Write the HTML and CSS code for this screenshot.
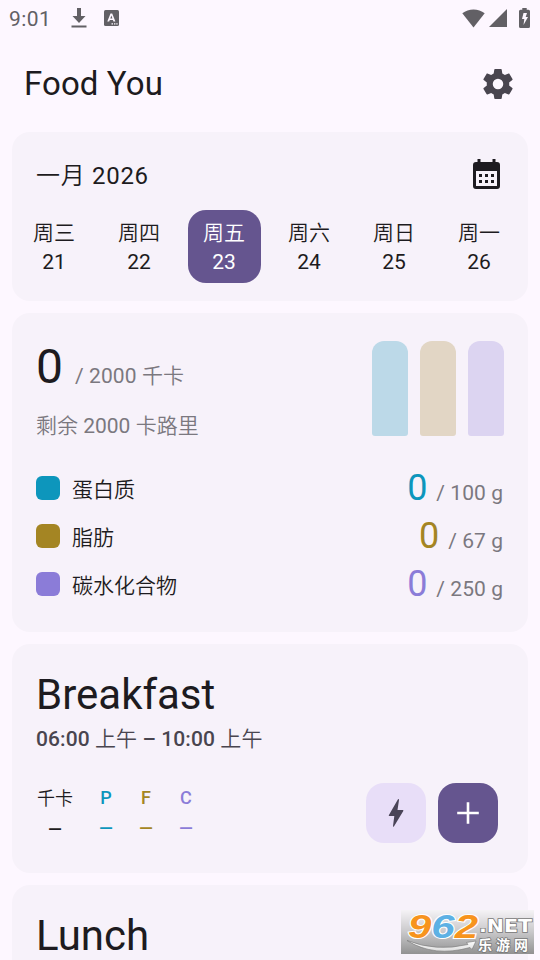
FILE: index.html
```html
<!DOCTYPE html>
<html lang="zh-CN">
<head>
<meta charset="utf-8">
<title>Food You</title>
<link rel="stylesheet" href="styles.css">
</head>
<body>
<div class="screen">
  <header class="status">
    <span class="clock">9:01</span>
    <svg class="st-download" width="16" height="22" viewBox="0 0 16 22"><path d="M6 1h4v8h4.500L8 16 1.500 9H6zM.5 18.500h15v2H.5z"/></svg>
    <svg class="st-app" width="15" height="16" viewBox="0 0 15 16"><rect width="15" height="16" rx="1.500"/><path class="cut" d="M3.300 11.500 6.500 3.500h1.700l3.200 8H9.500l-.6-1.600H5.800l-.6 1.600zM6.300 8.400h2.100L7.400 5.600zM7.500 13.300H9v1.300H7.500zM10 13.300h1.400v1.300H10zM12.300 13.300h1.300v1.300h-1.300z"/></svg>
    <span class="fill"></span>
    <svg width="23" height="19" viewBox="0 0 23 19"><path d="M.3 4.300C6.500-.9 16.500-.9 22.700 4.300L11.500 18.500z"/></svg>
    <svg class="st-signal" width="18" height="18" viewBox="0 0 18 18"><path d="M18 0v18H0z"/></svg>
    <svg class="st-battery" width="11" height="20" viewBox="0 0 11 20"><path d="M3.300 0h4.400v1.700H9.500Q11 1.700 11 3.200v15.300Q11 20 9.500 20h-8Q0 20 0 18.500V3.200Q0 1.700 1.500 1.700h1.800z"/><path class="cut" d="M4.500 5H8L6.700 9H9l-4.500 8 .8-6H3z"/></svg>
  </header>

  <div class="appbar">
    <h1>Food You</h1>
    <svg width="36" height="36" viewBox="0 0 24 24"><path d="M19.430 12.980c.04-.32.070-.64.070-.98s-.03-.66-.07-.98l2.110-1.650c.19-.15.240-.42.120-.64l-2-3.460c-.12-.22-.39-.3-.61-.22l-2.490 1c-.52-.4-1.080-.73-1.690-.98l-.38-2.650C14.460 2.180 14.250 2 14 2h-4c-.25 0-.46.180-.49.420l-.38 2.650c-.61.250-1.170.590-1.690.980l-2.490-1c-.23-.09-.49 0-.61.220l-2 3.460c-.13.220-.07.490.12.640l2.110 1.650c-.04.320-.07.650-.07.980s.03.660.070.980l-2.110 1.650c-.19.150-.24.420-.12.640l2 3.460c.12.220.39.300.61.220l2.490-1c.52.400 1.080.730 1.690.980l.38 2.650c.03.240.24.420.49.420h4c.25 0 .46-.18.490-.42l.38-2.650c.61-.25 1.170-.59 1.690-.98l2.490 1c.23.090.49 0 .61-.22l2-3.460c.12-.22.070-.49-.12-.64zM12 15.500A3.500 3.500 0 1 1 12 8.500a3.500 3.500 0 0 1 0 7z"/></svg>
  </div>

  <main class="cards">
    <section class="card calendar">
      <div class="month">
        <span><span class="zh">一月</span> 2026</span>
        <svg width="27" height="30" viewBox="0 0 27 30"><path fill-rule="evenodd" d="M4.500 0h3v3h12V0h3v3H24q3 0 3 3v21q0 3-3 3H3q-3 0-3-3V6q0-3 3-3h1.500zM3 12v15h21V12zM6 15h3v3H6zM12 15h3v3h-3zM18 15h3v3h-3zM6 21h3v3H6zM12 21h3v3h-3zM18 21h3v3h-3z"/></svg>
      </div>
      <div class="days">
        <div class="day"><span class="zh">周三</span><span>21</span></div>
        <div class="day"><span class="zh">周四</span><span>22</span></div>
        <div class="day selected"><span class="zh">周五</span><span>23</span></div>
        <div class="day"><span class="zh">周六</span><span>24</span></div>
        <div class="day"><span class="zh">周日</span><span>25</span></div>
        <div class="day"><span class="zh">周一</span><span>26</span></div>
      </div>
    </section>

    <section class="card summary">
      <div class="overview">
        <div>
          <div class="energy"><span class="total">0</span><span class="goal">/ 2000 <span class="zh">千卡</span></span></div>
          <div class="remaining"><span class="zh">剩余</span> 2000 <span class="zh">卡路里</span></div>
        </div>
        <div class="bars"><i class="bar protein"></i><i class="bar fat"></i><i class="bar carbs"></i></div>
      </div>
      <div class="macro protein"><i class="swatch"></i><span class="name zh">蛋白质</span><span class="amount">0</span><span class="goal">/ 100 g</span></div>
      <div class="macro fat"><i class="swatch"></i><span class="name zh">脂肪</span><span class="amount">0</span><span class="goal">/ 67 g</span></div>
      <div class="macro carbs"><i class="swatch"></i><span class="name zh">碳水化合物</span><span class="amount">0</span><span class="goal">/ 250 g</span></div>
    </section>

    <section class="card meal">
      <h2>Breakfast</h2>
      <div class="time">06:00 <span class="zh">上午</span> – 10:00 <span class="zh">上午</span></div>
      <div class="meal-row">
        <div class="stat kcal"><span class="zh">千卡</span><span>—</span></div>
        <div class="stat protein"><span>P</span><span>—</span></div>
        <div class="stat fat"><span>F</span><span>—</span></div>
        <div class="stat carbs"><span>C</span><span>—</span></div>
        <span class="fill"></span>
        <button class="btn quick" aria-label="Quick add"><svg width="60" height="60" viewBox="0 0 60 60"><path d="M32 16.300 22.800 32.200Q22.500 33 23.300 33H28.300L27 43q0 1.300.9.400L37.300 28q.4-1-.5-1H31.500L33 17q0-1.400-1-.7z"/></svg></button>
        <button class="btn add" aria-label="Add"><svg width="60" height="60" viewBox="0 0 60 60"><path d="M28.700 19.200h2.600v9.500h9.500v2.600h-9.500v9.500h-2.600v-9.500h-9.500v-2.600h9.500z"/></svg></button>
      </div>
    </section>

    <section class="card meal">
      <h2>Lunch</h2>
    </section>
  </main>

  <div class="badge">
    <svg width="133" height="44" viewBox="0 0 133 44">
      <defs><linearGradient id="sw" x1="0" x2="0" y1="0" y2="1"><stop offset="0" stop-color="#fff"/><stop offset="1" stop-color="#ddd"/></linearGradient></defs>
      <path d="M6 30.500Q35 42 67 34.500L65.500 32.500 75 31 71 39.500l-2-2Q33 47.500 6 30.500z" fill="url(#sw)" stroke="#777" stroke-width=".6"/>
      <text class="digits" x="7" y="27.500" textLength="70" lengthAdjust="spacingAndGlyphs"><tspan fill="#f7941d">9</tspan><tspan fill="#5db1e4">6</tspan><tspan fill="#f7941d">2</tspan></text>
      <text class="net" x="78" y="21.500" textLength="53" lengthAdjust="spacingAndGlyphs">.NET</text>
      <text class="site" x="77" y="39.500" textLength="50">乐游网</text>
    </svg>
  </div>
</div>
</body>
</html>
```
FILE: styles.css
```css
* { box-sizing: border-box; }
body { margin: 0; }
h1, h2 { margin: 0; font-weight: 400; }
svg { display: block; flex: none; }

.screen {
  position: relative;
  width: 540px;
  height: 960px;
  overflow: hidden;
  background: #fdf7ff;
  color: #1d1b20;
  font: 400 21px/30px Roboto, "Noto Sans CJK SC", sans-serif;
}
.zh { font-family: Roboto, "Noto Sans CJK SC DemiLight", "Noto Sans CJK SC Light", "Noto Sans CJK SC", sans-serif; font-weight: 350; }
.fill { flex: 1; }

.status {
  display: flex;
  align-items: center;
  height: 36px;
  padding: 0 10px 0 9px;
  color: #626065;
  fill: #626065;
}
.clock { width: 61.500px; padding-top: 1px; letter-spacing: .4px; }
.st-app { margin-left: 17px; }
.st-signal { margin-left: 4px; }
.st-battery { margin-left: 12px; }
.cut { fill: #fdf7ff; }

.appbar {
  display: flex;
  align-items: center;
  justify-content: space-between;
  height: 96px;
  padding: 0 24px;
  fill: #49454f;
}
.appbar h1 { font-size: 33px; line-height: 42px; letter-spacing: .1px; }

.cards { display: flex; flex-direction: column; gap: 12px; padding: 0 12px; }
.card { border-radius: 18px; background: #f7f2fa; overflow: hidden; }

.calendar { height: 169px; padding: 24px 6px 0; }
.month {
  display: flex;
  align-items: center;
  justify-content: space-between;
  height: 36px;
  margin-bottom: 18px;
  padding: 4px 22.500px 0 18px;
  font-size: 24px;
  letter-spacing: .7px;
  fill: #1d1b20;
}
.month svg { margin-top: -4px; }
.days { display: flex; gap: 12px; }
.day {
  display: flex;
  flex: none;
  flex-direction: column;
  align-items: center;
  width: 73px;
  height: 73px;
  padding: 9px 1px 0 0;
  border-radius: 18px;
  line-height: 29px;
}
.day.selected { background: #65558f; color: #fff; }

.summary { height: 319px; padding: 28px 24px 0; }
.overview { display: flex; justify-content: space-between; height: 123px; }
.energy { display: flex; align-items: baseline; gap: 12px; height: 51px; }
.total { font-size: 48px; line-height: 51px; }
.energy .goal { color: #7b787f; letter-spacing: .1px; }
.remaining { margin-top: 19px; color: #7b787f; }
.bars { display: flex; gap: 12px; height: 95px; }
.bar { width: 36px; border-radius: 12px 12px 3px 3px; }
.bar.protein { background: #bcd9e8; }
.bar.fat { background: #e2d6c5; }
.bar.carbs { background: #dcd4f1; }

.macro { display: flex; align-items: baseline; height: 48px; line-height: 48px; }
.swatch { align-self: flex-start; width: 24px; height: 24px; margin: 12px 12px 0 0; border-radius: 6px; background: currentColor; }
.macro .name { flex: 1; align-self: flex-start; padding-top: 2px; color: #1d1b20; }
.amount { font-size: 36px; }
.macro .goal { margin: 0 1px 0 9px; color: #7b787f; letter-spacing: .05px; }
.protein { color: #0d96bc; }
.fat { color: #a48523; }
.carbs { color: #8b7cd8; }

.meal { height: 229px; padding: 24px 30px 0 24px; }
.meal h2 { font-size: 42px; line-height: 54px; }
.time { margin-top: 2px; color: #49454f; font-weight: 500; letter-spacing: .08px; }
.meal-row { display: flex; height: 60px; margin-top: 29px; }
.stat {
  display: flex;
  flex-direction: column;
  align-items: center;
  width: 16px;
  margin-left: 24px;
  font-size: 18px;
  font-weight: 500;
}
.stat.kcal { width: 38px; margin: 0; padding-top: 1px; }
.stat span + span { padding-top: 1px; }
.btn { width: 60px; height: 60px; padding: 0; border: 0; border-radius: 18px; }
.quick { background: #e8def8; fill: #4a4458; }
.add { margin-left: 12px; background: #65558f; fill: #fff; }

.badge {
  position: absolute;
  top: 910px;
  left: 401px;
  width: 133px;
  height: 44px;
  background: linear-gradient(#f5f3f6, #c9c8ca 50%, #929292);
}
.badge svg { overflow: visible; }
.digits { font: italic 700 33px "Liberation Sans", sans-serif; stroke: #fff; stroke-width: 2px; paint-order: stroke; }
.net { font: 700 18px "DejaVu Sans", sans-serif; fill: #fff; stroke: #777; stroke-width: 1.500px; paint-order: stroke; }
.site { font: 700 14px "Noto Sans CJK SC", sans-serif; fill: #fff; stroke: #777; stroke-width: 1.500px; paint-order: stroke; }
```
